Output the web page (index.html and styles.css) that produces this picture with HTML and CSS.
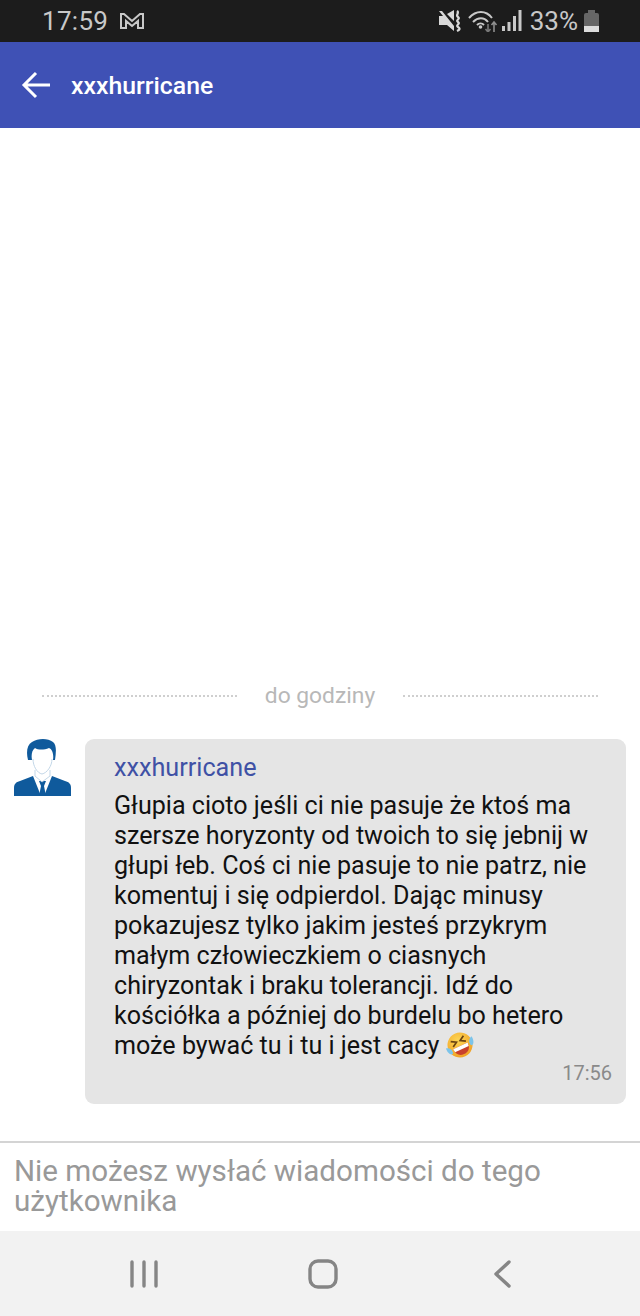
FILE: index.html
```html
<!DOCTYPE html>
<html lang="pl">
  <head>
    <meta charset="UTF-8" />
    <title>xxxhurricane</title>
    <link rel="stylesheet" href="styles.css">
  </head>
  <body>
    <div class="status">
      <span class="clock">17:59</span>
      <svg class="gmail" width="26" height="18" viewBox="0 0 26 18" fill="none" stroke="#c8c8c8" stroke-width="2">
        <path d="M2 2h3l8 7 8-7h3v14h-5V9l-6 5-6-5v7H2z" />
      </svg>
      <span class="status-right">
        <svg class="ic-sound" width="24" height="22" viewBox="0 0 24 22">
          <path d="M1 6h4L1 1h3l12 15v5L9 15H1z" fill="#d8d8d8" />
          <path d="M9 4l7-4v11z" fill="#d8d8d8" />
          <path d="M19 1c3 2-2 4 1 6s-3 3 0 5-3 3 0 5 1 3-1 4" stroke="#d8d8d8" stroke-width="2.2" fill="none" />
        </svg>
        <svg class="ic-wifi" width="30" height="22" viewBox="0 0 30 22" fill="none" stroke="#c8c8c8" stroke-width="2">
          <path d="M1 8c7-8 17-8 23 0" />
          <path d="M5 12c5-5 11-5 15 0" />
          <path d="M9 15c2-2 5-2 7 0" />
          <circle cx="12.5" cy="17" r="1.8" fill="#c8c8c8" stroke="none" />
          <path d="M20 22v-8M17.500 19l2.500 3 2.500-3" stroke="#777" stroke-width="1.6" />
          <path d="M26 22v-9M23.500 15l2.500-3 2.500 3" stroke="#8e8e8e" stroke-width="1.6" />
        </svg>
        <svg class="ic-signal" width="20" height="22" viewBox="0 0 20 22" fill="#c8c8c8">
          <rect x="0" y="16" width="3" height="5" />
          <rect x="5.500" y="12" width="3" height="9" />
          <rect x="11" y="6" width="3" height="15" />
          <rect x="16.500" y="0" width="3" height="21" />
        </svg>
        <span class="battery-text">33%</span>
        <span class="battery"><span class="battery-fill"></span></span>
      </span>
    </div>
    <header class="topbar">
      <svg class="back" width="30" height="30" viewBox="0 0 30 30" fill="none" stroke="#fff" stroke-width="3">
        <path d="M29 15H3M15 3L3 15l12 12" />
      </svg>
      <span class="title">xxxhurricane</span>
    </header>
    <main class="chat">
      <div class="divider">
        <span class="dots"></span>
        <span class="divider-text">do godziny</span>
        <span class="dots"></span>
      </div>
      <div class="message">
        <svg class="avatar" width="58" height="58" viewBox="0 0 58 58">
          <path d="M0 57v-8c0-4 2-6 6-7l13-5 8 20zM57 57v-8c0-4-2-6-6-7l-13-5-8 20z" fill="#0f5a9c" />
          <path d="M25 42h7l-2 5 2 10h-7l2-10z" fill="#0f5a9c" />
          <path d="M14 21C12 13 13 6 18 3c6-4 16-4 21 0 4 3 3 11 2 18h-2C40 15 38 10 35 9c-5 2-11 2-14 0-3 2-4 7-3 12z" fill="#0f5a9c" />
          <path d="M19 20c0 7 4 14 9 15 5-1 10-8 10-15M21 31v6l7 6 8-6v-6" fill="none" stroke="#c3d7e8" stroke-width="1" />
        </svg>
        <div class="bubble">
          <div class="author">xxxhurricane</div>
          <div class="text">Głupia cioto jeśli ci nie pasuje że ktoś ma szersze horyzonty od twoich to się jebnij w głupi łeb. Coś ci nie pasuje to nie patrz, nie komentuj i się odpierdol. Dając minusy pokazujesz tylko jakim jesteś przykrym małym człowieczkiem o ciasnych chiryzontak i braku tolerancji. Idź do kościółka a później do burdelu bo hetero może bywać tu i tu i jest cacy <svg class="emoji" width="28" height="28" viewBox="0 0 28 28">
              <defs>
                <radialGradient id="face" cx="0.5" cy="0.3" r="0.8">
                  <stop offset="0" stop-color="#fdd655" />
                  <stop offset="1" stop-color="#ef9a1e" />
                </radialGradient>
              </defs>
              <g transform="rotate(-25 14 14)">
                <circle cx="14" cy="14" r="12.500" fill="url(#face)" />
                <path d="M7 7l5 3-5 3M21 7l-5 3 5 3" fill="none" stroke="#6b4413" stroke-width="1.700" />
                <path d="M6 15h16c0 6-3 9-8 9s-8-3-8-9z" fill="#c8402c" />
                <path d="M6 15h16l-.5 3.500h-15z" fill="#fff" />
                <path d="M0 11c3 1 6 4 4 8-3 1-5-4-4-8zM28 11c-3 1-6 4-4 8 3 1 5-4 4-8z" fill="#7cc4ea" />
              </g>
            </svg></div>
          <div class="time">17:56</div>
        </div>
      </div>
    </main>
    <div class="input-bar">Nie możesz wysłać wiadomości do tego użytkownika</div>
    <nav class="navbar">
      <svg width="30" height="30" viewBox="0 0 30 30" fill="none" stroke="#858585" stroke-width="3.400" stroke-linecap="round">
        <path d="M3 3v24M15 3v24M27 3v24" />
      </svg>
      <svg width="30" height="30" viewBox="0 0 30 30" fill="none" stroke="#858585" stroke-width="3.400">
        <rect x="2" y="2" width="26" height="26" rx="8" />
      </svg>
      <svg width="30" height="30" viewBox="0 0 30 30" fill="none" stroke="#858585" stroke-width="3.400" stroke-linecap="round" stroke-linejoin="round">
        <path d="M22 3L9 15l13 12" />
      </svg>
    </nav>
  </body>
</html>
```

FILE: styles.css
```css
* {
  box-sizing: border-box;
}
html,
body {
  height: 100%;
}
body {
  margin: 0;
  display: flex;
  flex-direction: column;
  background: #fff;
  font-family: Roboto, "Liberation Sans", sans-serif;
}
.status {
  height: 42px;
  flex: none;
  display: flex;
  align-items: center;
  padding: 0 41px 0 42px;
  background: #1c1c1c;
  color: #c8c8c8;
}
.clock {
  font-size: 26px;
  letter-spacing: 0.3px;
}
.gmail {
  margin-left: 11px;
}
.status-right {
  margin-left: auto;
  display: flex;
  align-items: center;
}
.ic-wifi {
  margin-left: 6px;
}
.ic-signal {
  margin-left: 4px;
}
.battery-text {
  margin-left: 8px;
  font-size: 26px;
}
.battery {
  width: 15px;
  height: 19px;
  margin: 3px 0 0 6px;
  position: relative;
  border-radius: 2px;
  background: #666;
  display: flex;
  align-items: flex-end;
}
/* battery cap */
.battery::before {
  content: "";
  position: absolute;
  top: -3px;
  left: 4px;
  width: 7px;
  height: 3px;
  background: #666;
}
.battery-fill {
  width: 100%;
  height: 6px;
  background: #dcdcdc;
}
.topbar {
  height: 86px;
  flex: none;
  display: flex;
  align-items: center;
  padding-left: 21px;
  background: #3f51b5;
  color: #fff;
}
.title {
  margin-left: 20px;
  font-size: 24.800px;
  font-weight: 500;
}
.chat {
  flex: 1;
  display: flex;
  flex-direction: column;
  justify-content: flex-end;
  padding: 0 14px 37px;
}
.divider {
  display: flex;
  align-items: center;
  justify-content: center;
  gap: 28px;
  margin-bottom: 30px;
}
.dots {
  width: 195px;
  border-top: 2px dotted #cfcfcf;
}
.divider-text {
  font-size: 22.800px;
  color: #b8b8b8;
}
.message {
  display: flex;
  align-items: flex-start;
  gap: 13px;
}
.avatar {
  flex: none;
}
.bubble {
  flex: 1;
  padding: 14px 14px 19px 29px;
  border-radius: 9px;
  background: #e5e5e5;
}
.author {
  font-size: 25.200px;
  line-height: 30px;
  color: #3f51a5;
  margin-bottom: 8px;
}
.text {
  font-size: 25.100px;
  line-height: 30px;
  color: #111;
}
.emoji {
  vertical-align: -5px;
}
.time {
  text-align: right;
  font-size: 20px;
  color: #8a8a8a;
}
.input-bar {
  height: 90px;
  flex: none;
  padding: 13px 14px 0;
  border-top: 2px solid #d4d4d4;
  font-size: 29.600px;
  line-height: 30px;
  color: #999;
}
.navbar {
  height: 85px;
  flex: none;
  display: flex;
  align-items: center;
  justify-content: space-between;
  padding: 0 123px 0 129px;
  background: #f2f2f2;
}
```
